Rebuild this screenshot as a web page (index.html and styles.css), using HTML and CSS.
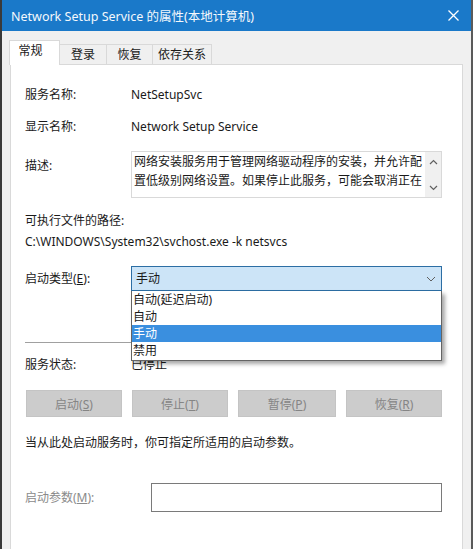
FILE: index.html
```html
<!DOCTYPE html>
<html lang="zh-CN">
<head>
  <meta charset="UTF-8" />
  <title>Network Setup Service 的属性(本地计算机)</title>
  <link rel="stylesheet" href="styles.css">
</head>
<body>
  <div class="window">
    <div class="titlebar">
      <span class="title">Network Setup Service 的属性(本地计算机)</span>
      <svg class="close" width="11" height="11" viewBox="0 0 11 11">
        <path d="M0.5 0.5 L10.5 10.5 M10.5 0.5 L0.5 10.5" stroke="#ffffff" stroke-width="1.3" fill="none"/>
      </svg>
    </div>

    <div class="client">
      <ul class="tabs">
        <li class="tab active">常规</li>
        <li class="tab">登录</li>
        <li class="tab">恢复</li>
        <li class="tab">依存关系</li>
      </ul>

      <div class="panel">
        <div class="row r-name">
          <span class="label">服务名称:</span>
          <span class="value">NetSetupSvc</span>
        </div>
        <div class="row r-display">
          <span class="label">显示名称:</span>
          <span class="value">Network Setup Service</span>
        </div>
        <div class="row r-desc">
          <span class="label desc-label">描述:</span>
          <div class="descbox">
            <div class="desc-text">网络安装服务用于管理网络驱动程序的安装，并允许配置低级别网络设置。如果停止此服务，可能会取消正在</div>
            <div class="scrollbar">
              <svg width="9" height="6" viewBox="0 0 9 6"><path d="M1 5 L4.5 1.5 L8 5" stroke="#606060" stroke-width="1.2" fill="none"/></svg>
              <svg width="9" height="6" viewBox="0 0 9 6"><path d="M1 1 L4.5 4.5 L8 1" stroke="#606060" stroke-width="1.2" fill="none"/></svg>
            </div>
          </div>
        </div>
        <div class="path-label">可执行文件的路径:</div>
        <div class="path">C:\WINDOWS\System32\svchost.exe -k netsvcs</div>

        <div class="row r-startup">
          <span class="label">启动类型(<u>E</u>):</span>
          <div class="combo-wrap">
            <div class="combo">
              <span>手动</span>
              <svg width="10" height="6" viewBox="0 0 10 6"><path d="M1 1 L5 5 L9 1" stroke="#606060" stroke-width="1" fill="none"/></svg>
            </div>
            <ul class="dropdown">
              <li>自动(延迟启动)</li>
              <li>自动</li>
              <li class="selected">手动</li>
              <li>禁用</li>
            </ul>
          </div>
        </div>

        <div class="separator"></div>

        <div class="row r-status">
          <span class="label">服务状态:</span>
          <span class="value">已停止</span>
        </div>

        <div class="buttons">
          <button class="btn" disabled>启动(<u>S</u>)</button>
          <button class="btn" disabled>停止(<u>T</u>)</button>
          <button class="btn wide" disabled>暂停(<u>P</u>)</button>
          <button class="btn" disabled>恢复(<u>R</u>)</button>
        </div>

        <div class="note">当从此处启动服务时，你可指定所适用的启动参数。</div>

        <div class="row r-params">
          <span class="label muted">启动参数(<u>M</u>):</span>
          <div class="params-input"></div>
        </div>
      </div>
    </div>
  </div>
</body>
</html>
```

FILE: styles.css
```css
body {
  margin: 0;
  font-family: "Noto Sans", "Noto Sans CJK SC", sans-serif;
  font-size: 12px;
  color: #1a1a1a;
  background: #f0f0f0;
}
.window {
  width: 473px;
  height: 549px;
  box-sizing: border-box;
  border-left: 2px solid #3a3a3a;
  border-right: 2px solid #5a5a5a;
  background: #f0f0f0;
  overflow: hidden;
}
.titlebar {
  height: 31px;
  background: #1a79c9;
  color: #f4f8fc;
  display: flex;
  align-items: center;
  justify-content: space-between;
  padding: 0 12px 0 9px;
  font-size: 12.5px;
}
.titlebar .close {
  margin-top: 0;
}
.client {
  padding: 9px 8px 0 7px;
}
.tabs {
  list-style: none;
  margin: 0;
  padding: 0;
  display: flex;
  align-items: flex-end;
  height: 24px;
  position: relative;
  z-index: 1;
}
.tab {
  height: 20px;
  line-height: 19px;
  box-sizing: border-box;
  border: 1px solid #d9d9d9;
  border-bottom: none;
  border-left: none;
  background: #f0f0f0;
  text-align: center;
  color: #1a1a1a;
}
.tab:nth-child(2) { width: 47px; }
.tab:nth-child(3) { width: 46px; }
.tab:nth-child(4) { width: 59px; }
.tab.active {
  width: 51px;
  height: 25px;
  line-height: 20px;
  margin-bottom: -1px;
  background: #ffffff;
  border-left: 1px solid #d9d9d9;
  padding-right: 8px;
}
.panel {
  background: #ffffff;
  border: 1px solid #d9d9d9;
  height: 486px;
  box-sizing: border-box;
  padding: 21px 20px 0 14px;
  margin-left: 1px;
}
.row {
  display: flex;
  align-items: center;
  line-height: 18px;
}
.label {
  width: 106px;
  flex-shrink: 0;
}
.muted {
  color: #8a8a8a;
  width: 126px;
}
.r-display { margin-top: 14px; }
.r-desc {
  margin-top: 15px;
  align-items: flex-start;
}
.desc-label {
  padding-top: 6px;
}
.descbox {
  flex: 1;
  height: 47px;
  box-sizing: border-box;
  border: 1px solid #d9d9d9;
  display: flex;
  padding-left: 2px;
}
.desc-text {
  flex: 1;
  line-height: 19px;
  padding-top: 0;
  overflow: hidden;
}
.scrollbar {
  width: 16px;
  background: #f0f0f0;
  display: flex;
  flex-direction: column;
  justify-content: space-between;
  align-items: center;
  padding: 7px 0 6px;
  box-sizing: border-box;
}
.path-label {
  margin-top: 14px;
  line-height: 18px;
}
.path {
  margin-top: 3px;
  line-height: 18px;
}
.r-startup { margin-top: 15px; }
.combo-wrap {
  flex: 1;
  position: relative;
}
.combo {
  height: 25px;
  box-sizing: border-box;
  border: 1px solid #2c6ea4;
  background: #cce4f7;
  display: flex;
  align-items: center;
  justify-content: space-between;
  padding: 0 5px 0 4px;
}
.dropdown {
  position: absolute;
  left: 0;
  right: 0;
  top: 25px;
  margin: 0;
  padding: 0 0 1px;
  list-style: none;
  background: #ffffff;
  border: 1px solid #646464;
  border-top: none;
  box-shadow: 3px 3px 4px rgba(0, 0, 0, 0.35);
  z-index: 5;
}
.dropdown li {
  height: 17px;
  line-height: 17px;
  padding-left: 1px;
}
.dropdown li.selected {
  background: #3a8fdf;
  color: #ffffff;
}
.separator {
  margin-top: 51px;
  height: 1px;
  background: #a0a0a0;
}
.r-status { margin-top: 13px; }
.buttons {
  margin-top: 16px;
  display: flex;
  justify-content: space-between;
  padding-left: 1px;
}
.btn {
  width: 96px;
  height: 27px;
  border: 1px solid #c4c4c4;
  background: #cccccc;
  color: #858585;
  font-family: inherit;
  font-size: 12px;
  padding: 0;
}
.btn.wide { width: 98px; }
.note {
  margin-top: 17px;
  line-height: 18px;
}
.r-params { margin-top: 31px; }
.params-input {
  flex: 1;
  height: 29px;
  box-sizing: border-box;
  border: 1px solid #7a7a7a;
  background: #ffffff;
}
```
